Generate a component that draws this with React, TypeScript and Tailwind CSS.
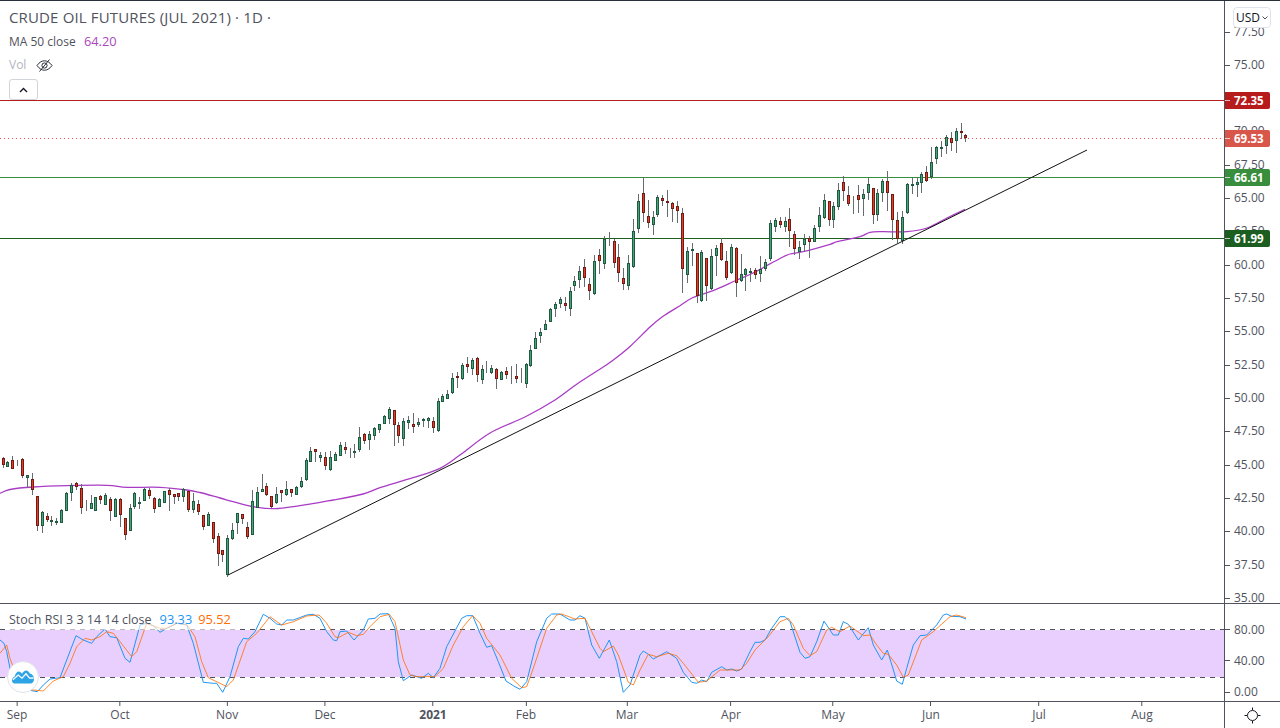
import React from "react";

type C = [number, number, number, number, number, number];
// [zoom x, green?, wick top, body top, body bottom, wick bottom]
const Z3: C[] = [
[10,0,52,55,74,83],[22,1,62,65,80,82],[37,0,48,60,86,87],[52,0,60,69,72,78],[67,0,55,58,107,113],[82,1,104,106,113,143],[97,0,99,118,151,165],[112,0,168,169,257,273],[127,1,212,217,257,278],[142,0,220,229,239,245],[154,1,228,241,245,258],[169,1,234,244,248,255],[184,1,207,211,248,248],[199,1,155,160,212,213],[214,1,128,136,158,183],[229,0,127,130,140,150],[244,0,133,145,203,222],[259,0,180,192,194,213],[274,1,165,190,206,208],[286,1,170,172,212,212],[301,0,165,167,179,192],[316,1,160,166,194,195],[331,0,170,178,212,243],[346,1,175,178,230,232],[361,0,175,178,224,261],[376,0,235,235,284,300],[391,1,193,205,272,273],[403,1,157,160,200,208],[418,1,172,187,191,207],[433,1,143,148,182,183],[448,0,145,151,167,176],[463,0,172,173,206,219],[478,1,173,178,200,201],[493,1,153,154,188,190],[508,0,145,151,164,212],[523,0,162,163,170,192],[535,0,158,160,170,183],[550,1,145,148,170,186],[565,0,152,154,209,215],[580,1,160,184,209,219],[595,0,180,193,215,225],[610,0,225,226,260,270],[625,1,217,222,257,258],[640,0,247,247,296,309],[655,0,280,289,341,378],[667,0,331,331,344,366],[682,1,285,295,404,410],[697,1,250,271,296,300],[712,1,220,220,250,281],[727,0,222,223,236,252],[742,0,247,262,290,297],[757,1,150,184,284,285],[772,1,141,157,204,205],[787,1,102,148,155,155],[799,0,130,139,164,168],[814,0,168,169,200,203],[829,1,141,163,190,191],[844,0,150,151,160,186],[859,1,124,148,164,168],[874,0,146,148,158,170],[889,1,139,142,164,164],[904,1,112,124,142,143],[919,1,53,61,121,123],[931,1,21,34,65,66],[946,0,28,28,35,65],
];
const Z9: C[] = [
[361,1,155,166,173,186],[376,0,155,172,197,210],[391,1,153,172,210,212],[406,1,155,163,182,183],[421,1,127,136,167,168],[436,0,127,142,149,162],[451,1,143,150,152,174],[463,1,133,154,158,175],[478,1,82,112,150,155],[493,0,99,103,122,132],[508,1,94,103,119,150],[523,1,82,85,107,120],[538,1,72,73,89,98],[553,1,45,49,71,72],[568,1,22,28,56,72],[583,0,30,31,74,137],[595,0,67,76,107,128],[610,1,55,64,116,137],[625,1,48,61,68,86],[640,0,40,73,80,98],[655,1,55,67,74,80],[670,1,55,58,64,80],[685,1,50,55,62,85],[700,0,50,64,83,100],[715,1,-5,4,92,95],
];
const Z10: C[] = [
[37,1,492,498,515,516],[52,1,480,492,506,507],[67,1,430,445,488,492],[82,0,425,438,444,474],[97,1,400,406,446,450],[112,0,381,403,410,430],[127,1,385,391,416,436],[142,0,382,385,434,456],[157,1,405,418,449,462],[169,1,393,411,413,430],[184,1,405,415,428,432],[199,0,415,416,446,477],[214,1,423,427,450,451],[229,0,410,424,434,447],[244,1,408,426,428,462],[259,0,403,439,446,458],[274,0,415,450,452,460],[289,1,398,403,461,473],[301,1,345,361,407,410],[316,1,307,325,356,358],[331,1,293,307,317,338],[346,1,270,283,299,300],[361,1,235,238,275,276],[376,1,216,223,236,260],[391,1,202,208,221,235],[406,0,200,220,227,243],[421,1,171,184,238,258],[433,1,138,154,167,182],[448,1,107,124,149,173],[463,0,87,112,145,170],[478,0,145,163,182,209],[493,1,75,94,193,194],[508,0,57,76,92,131],[523,1,18,27,103,117],[538,0,6,22,25,47],[553,0,28,34,100,115],[565,0,42,82,130,156],[580,0,113,145,161,180],[595,1,75,100,169,180],
];
const Z7: C[] = [
[160,1,178,214,320,325],[175,1,103,124,206,218],[190,0,52,100,158,185],[205,0,120,169,188,203],[220,1,153,172,196,224],[232,1,105,112,166,170],[247,0,105,115,122,137],[262,0,90,124,128,172],[277,0,125,130,146,187],[292,0,123,139,154,190],[307,0,145,160,328,400],[322,1,262,274,346,370],[337,1,250,268,274,318],[352,0,278,280,409,430],[364,1,270,277,424,425],[379,0,293,295,379,422],[394,1,268,287,388,390],[409,1,255,265,289,347],[424,0,235,250,301,303],[439,0,272,304,355,360],[454,1,252,262,340,342],[469,0,262,265,370,412],[484,1,282,343,364,367],[496,1,325,328,346,392],[511,1,325,334,338,365],[526,0,325,331,346,357],[541,1,289,328,343,367],[556,1,298,307,328,333],[571,1,180,190,298,303],[586,1,175,181,202,215],
];
const Z8: C[] = [
[1,0,320,334,344,355],[16,1,320,334,350,365],[28,0,295,328,362,410],[43,0,364,373,416,435],[58,1,392,412,425,446],[73,1,372,386,404,422],[88,0,378,385,395,443],[103,1,344,355,395,396],[118,1,292,316,350,365],[133,1,252,271,323,326],[148,0,274,274,329,348],[160,1,275,289,329,355],[175,1,220,241,290,300],[190,0,198,217,242,272],[205,0,228,256,281,287],[220,1,258,270,273,312],[235,0,225,256,269,308],[250,1,238,253,268,318],[265,1,204,223,248,270],[280,0,233,235,314,342],[292,1,238,250,314,333],[307,1,206,214,248,276],[322,0,183,214,248,302],[337,0,253,253,331,390],[352,0,306,331,388,400],[367,1,303,322,394,403],[382,1,220,223,310,312],[397,1,205,223,227,252],[412,1,205,217,224,262],[424,1,185,193,220,248],[439,0,168,187,214,217],[454,1,112,157,200,208],[469,1,108,112,146,162],[484,1,92,112,116,140],[499,1,75,82,109,133],[514,0,67,85,98,124],[529,1,55,64,94,128],[544,0,40,64,68,88],[556,0,73,76,85,97],
];

const toAbs = (list: C[], ox: number, oy: number) =>
  list.map(([z, g, a, b, c, d]) => ({
    x: Math.floor(ox + z / 3),
    g,
    wt: Math.round(oy + a / 3),
    bt: Math.round(oy + b / 3),
    bb: Math.round(oy + c / 3),
    wb: Math.round(oy + d / 3),
  }));

const candles = [
  ...toAbs(Z3, 0, 440),
  ...toAbs(Z9, 200, 400),
  ...toAbs(Z10, 430, 230),
  ...toAbs(Z7, 580, 160),
  ...toAbs(Z8, 780, 110),
];

const maPts: number[][] = "0,493.3 10,489.5 33,487 67,485.7 107,485.3 127,487.3 160,487.3 187,490 200,492.5 220,498 233,501.7 252,506.5 275,508.7 300,505.7 333,500 363,494 380,487.7 413,477.7 440,468.3 460,455 490,433 525,417 555,400 577,384 597,371 612,361 630,346.5 650,327 662,317 680,305.7 693,297.5 713,290.7 737,280 753,273 780,258.5 790,254 803,251.7 830,244.3 837,241.7 860,236.7 870,232.3 883,231.7 907,231.7 927,228 947,218 965,209.3"
  .split(" ")
  .map((p) => p.split(",").map(Number));

// Catmull-Rom to Bezier so the moving average reads as a smooth curve
const maPath = maPts
  .map((p, i) => {
    if (i === 0) return `M${p[0]} ${p[1]}`;
    const p0 = maPts[i - 2] ?? maPts[i - 1];
    const p1 = maPts[i - 1];
    const p3 = maPts[i + 1] ?? p;
    const c1 = [p1[0] + (p[0] - p0[0]) / 6, p1[1] + (p[1] - p0[1]) / 6];
    const c2 = [p[0] - (p3[0] - p1[0]) / 6, p[1] - (p3[1] - p1[1]) / 6];
    return `C${c1[0].toFixed(1)} ${c1[1].toFixed(1)} ${c2[0].toFixed(1)} ${c2[1].toFixed(1)} ${p[0]} ${p[1]}`;
  })
  .join("");

const Z4B = "0,135 12,145 20,170 30,220 45,255 60,270 85,285 112,290 130,270 150,252 180,248 200,195 228,122 250,135 275,145 290,125 315,102 330,125 350,128 375,190 390,202 420,90 440,85 460,92 480,112 500,100 530,85 560,90 580,145 610,262 640,265 650,265 668,292 690,245 715,155 730,130 745,132 765,110 790,58 810,70 830,87 845,90 860,75 880,75 920,60 940,58";
const Z4O = "0,175 20,150 30,190 50,245 70,280 100,285 130,288 160,258 190,245 210,205 230,155 255,130 275,135 300,125 320,110 340,115 360,140 395,185 410,170 440,85 480,100 500,100 530,85 560,88 585,125 605,200 625,248 660,265 680,275 700,255 740,140 770,115 810,65 845,90 880,80 920,63 955,60";
const Z5B = "0,70 20,110 40,135 50,137 60,110 80,108 102,135 130,105 145,72 165,70 180,57 205,56 225,100 235,200 250,257 275,240 305,250 325,235 340,248 360,220 380,155 425,70 440,62 458,62 480,115 500,157 515,152 535,200 558,258 580,272 600,283 620,260 650,140 680,70 695,57 720,57 750,75 765,75 780,62 795,70 815,150 838,190 868,135 890,200 910,292 930,270 960,180";
const Z5O = "0,62 20,85 45,125 55,128 85,112 110,122 130,118 150,95 180,65 208,58 225,80 250,195 270,240 290,245 345,245 370,220 400,150 430,95 458,62 480,85 500,130 540,180 575,250 605,278 620,275 640,220 680,100 710,60 725,57 765,72 795,70 815,110 840,160 850,170 880,153 895,180 925,262 940,270 960,225";
const Z6B = "10,168 25,178 40,192 80,170 110,190 130,232 155,262 170,265 185,255 200,260 215,232 245,215 260,225 275,222 290,228 305,222 330,170 345,142 360,142 375,135 395,100 420,65 435,65 450,80 480,172 495,190 510,185 530,140 552,78 580,120 595,120 610,80 625,88 655,135 685,98 700,150 725,195 742,165 770,258 787,268 800,220 820,150 840,122 860,120 890,90 910,60 920,57 935,64 960,65 978,72";
const Z6O = "25,178 50,185 85,175 110,182 130,205 175,262 200,258 240,225 300,225 320,205 345,165 385,125 420,80 445,70 460,90 490,160 510,182 530,170 560,105 575,97 600,110 630,93 670,122 690,120 710,150 730,175 745,178 770,210 790,247 805,240 845,135 880,110 930,65 950,60 978,68";

const conv = (s: string, ox: number) =>
  s
    .split(" ")
    .map((p) => {
      const [a, b] = p.split(",").map(Number);
      return `${(ox + a / 3).toFixed(1)},${(595 + b / 3).toFixed(1)}`;
    })
    .join(" ");

const blue = [conv(Z4B, 0), conv(Z5B, 320), conv(Z6B, 640)].join(" ");
const orange = [conv(Z4O, 0), conv(Z5O, 320), conv(Z6O, 640)].join(" ");

const priceTicks: [string, number][] = [
  ["77.50", 32], ["75.00", 65], ["70.00", 131], ["67.50", 165], ["65.00", 198], ["62.50", 231],
  ["60.00", 265], ["57.50", 298], ["55.00", 331], ["52.50", 365], ["50.00", 398], ["47.50", 431],
  ["45.00", 465], ["42.50", 498], ["40.00", 531], ["37.50", 565], ["35.00", 598],
];
const rsiTicks: [string, number][] = [["80.00", 629.5], ["40.00", 660.5], ["0.00", 692]];
const badges: [string, number, string][] = [
  ["72.35", 92, "bg-[#b71c1c]"],
  ["69.53", 130, "bg-[#d9574a]"],
  ["66.61", 169, "bg-[#388e3c]"],
  ["61.99", 230, "bg-[#1b5e20]"],
];
const months: [string, number, boolean][] = [
  ["Sep", 17, false], ["Oct", 120, false], ["Nov", 227, false], ["Dec", 325, false], ["2021", 433, true],
  ["Feb", 526, false], ["Mar", 627, false], ["Apr", 731, false], ["May", 833, false], ["Jun", 931, false],
  ["Jul", 1039, false], ["Aug", 1142, false],
];

function AxisLabel({ text, y, top }: { text: string; y: number; top: number }) {
  return (
    <div className="absolute left-0 flex items-center h-4 -translate-y-1/2" style={{ top: y - top }}>
      <span className="w-[5px] h-px bg-[#50535e]" />
      <span className="ml-[4px] text-xs leading-4 text-[#50535e]">{text}</span>
    </div>
  );
}

export default function App() {
  return (
    <div className="w-[1280px] h-[728px] bg-white border-t border-[#2a2e39] flex flex-col overflow-hidden font-['Open_Sans','Liberation_Sans',sans-serif]">
      {/* main pane */}
      <div className="h-[603px] flex border-b border-[#50535e]">
        <div className="relative w-[1224px]">
          <svg className="block w-[1224px] h-[602px]" viewBox="0 1 1224 602">
            <line x1="0" x2="1224" y1="100.5" y2="100.5" stroke="#b71c1c" />
            <line x1="0" x2="1224" y1="138.5" y2="138.5" stroke="#ef5350" strokeDasharray="1 3" />
            <line x1="0" x2="1224" y1="177.5" y2="177.5" stroke="#388e3c" />
            <line x1="0" x2="1224" y1="238.5" y2="238.5" stroke="#1b5e20" />
            <path d={maPath} fill="none" stroke="#a93cc4" strokeWidth="1.3" strokeLinejoin="round" />
            {candles.map((c, i) => (
              <g key={i} shapeRendering="crispEdges">
                <rect x={c.x} y={c.wt} width="1" height={Math.max(c.wb - c.wt, 1)} fill="#666b70" />
                <rect
                  x={c.x - 0.5}
                  y={c.bt + 0.5}
                  width="2"
                  height={Math.max(c.bb - c.bt - 1, 0)}
                  fill={c.g ? "#4aa37a" : "#e53c28"}
                  stroke={c.g ? "#1e5a40" : "#6f1d14"}
                />
              </g>
            ))}
            <line x1="228" y1="575" x2="1087" y2="150" stroke="#111" strokeWidth="1" />
          </svg>
          <div className="absolute left-[9px] top-[6px] flex flex-col items-start">
            <div className="h-5 text-[15px] leading-5 tracking-[0.15px] text-[#50535e] whitespace-nowrap">CRUDE OIL FUTURES (JUL 2021) · 1D ·</div>
            <div className="mt-1 h-5 text-xs leading-5 text-[#50535e] whitespace-nowrap">
              MA 50 close <span className="ml-[5px] text-[12.8px] text-[#ab47bc]">64.20</span>
            </div>
            <div className="mt-1 h-5 flex items-center text-xs text-[#b2b5be]">
              Vol
              <svg className="ml-[10px]" width="17" height="17" viewBox="0 0 17 17" fill="none" stroke="#2a2e39" strokeWidth="1">
                <path d="M1 8.5C3.5 5 6 3.8 8.5 3.8S13.5 5 16 8.5C13.5 12 11 13.2 8.5 13.2S3.5 12 1 8.5Z" />
                <circle cx="8.5" cy="8.5" r="2.6" />
                <path d="M3.5 14.5 13.5 2.5" />
              </svg>
            </div>
            <button className="mt-[4px] w-[29px] h-[21px] flex items-center justify-center bg-white border border-[#d1d4dc] rounded-[3px]">
              <svg width="9" height="6" viewBox="0 0 9 6" fill="none" stroke="#131722" strokeWidth="1.4">
                <path d="M1 5 4.5 1.6 8 5" />
              </svg>
            </button>
          </div>
        </div>
        <div className="relative flex-1 border-l border-[#50535e]">
          {priceTicks.map(([t, y]) => (
            <AxisLabel key={t} text={t} y={y} top={1} />
          ))}
          {badges.map(([t, y, bg]) => (
            <div
              key={t}
              className={`absolute left-0 w-[45px] h-[17px] rounded-r-[2px] flex items-center text-[11.5px] font-bold text-white ${bg}`}
              style={{ top: y - 1 }}
            >
              <span className="w-[5px] h-px bg-white/70" />
              <span className="ml-[4px] leading-4">{t}</span>
            </div>
          ))}
          <button className="absolute left-[8px] top-[6px] w-[38px] h-[21px] flex items-center justify-center gap-[2px] bg-white/90 border border-[#e0e3eb] rounded-[4px] text-xs text-[#131722]">
            USD
            <svg width="6" height="4" viewBox="0 0 6 4" fill="none" stroke="#50535e" strokeWidth="1">
              <path d="M.5.5 3 3 5.5.5" />
            </svg>
          </button>
        </div>
      </div>
      {/* Stoch RSI pane */}
      <div className="h-[98px] flex border-b border-[#50535e]">
        <div className="relative w-[1224px]">
          <svg className="block w-[1224px] h-[97px]" viewBox="0 604 1224 97">
            <rect x="0" y="630" width="1224" height="47" fill="#e9cffd" />
            <line x1="0" x2="1224" y1="629.5" y2="629.5" stroke="#50535e" strokeDasharray="5 5" />
            <line x1="0" x2="1224" y1="677.5" y2="677.5" stroke="#50535e" strokeDasharray="5 5" />
            <polyline points={blue} fill="none" stroke="#2196f3" strokeWidth="1" strokeLinejoin="round" />
            <polyline points={orange} fill="none" stroke="#ff6d00" strokeOpacity="0.8" strokeWidth="1" strokeLinejoin="round" />
          </svg>
          <div className="absolute left-[9px] top-[6px] pr-[5px] h-5 flex items-center bg-white/60 text-[12.5px] text-[#50535e] whitespace-nowrap">
            Stoch RSI 3 3 14 14 close
            <span className="ml-[8px] text-[12.8px] text-[#2196f3]">93.33</span>
            <span className="ml-[6px] text-[12.8px] text-[#ff6d00]">95.52</span>
          </div>
          <div className="absolute left-[7px] top-[57px] w-[32px] h-[32px] rounded-full bg-white border border-[#e0e3eb] flex items-center justify-center">
            <svg width="22" height="14" viewBox="0 0 22 14">
              <path
                fill="#2ea3e6"
                d="M0 10.5C0 8.6 1.2 7.2 2.6 6.6 3.4 3.6 5 1.6 6.8 1.6 8 1.6 9 2.6 10 3.8 11 2 12.6.6 14.2.6 15.8.6 17 2 17.8 3.6 20 3.8 22 6 22 9 22 11.6 20.6 13.4 19 13.4H2.6C1 13.4 0 12.2 0 10.5Z"
              />
              <path d="M1 9.8 6.2 5 10 8.2 14 3.8 17.6 8.2 21.5 8" fill="none" stroke="#fff" strokeWidth="1.3" />
            </svg>
          </div>
        </div>
        <div className="relative flex-1 border-l border-[#50535e]">
          {rsiTicks.map(([t, y]) => (
            <AxisLabel key={t} text={t} y={y} top={604} />
          ))}
        </div>
      </div>
      {/* time axis */}
      <div className="flex-1 flex">
        <div className="relative w-[1224px]">
          {months.map(([t, x, bold]) => (
            <div key={t} className="absolute top-0 flex flex-col items-center -translate-x-1/2" style={{ left: x }}>
              <span className="w-px h-[4px] bg-[#50535e]" />
              <span className={`mt-[1px] text-xs leading-4 text-[#50535e] ${bold ? "font-bold" : ""}`}>{t}</span>
            </div>
          ))}
        </div>
        <div className="flex-1 border-l border-[#50535e] flex items-center justify-center">
          <svg width="17" height="17" viewBox="0 0 17 17" fill="none" stroke="#131722" strokeWidth="1">
            <circle cx="8.5" cy="8.5" r="5" />
            <path d="M8.5 0.5V3M8.5 14V16.5M.5 8.5H3M14 8.5H16.5" />
          </svg>
        </div>
      </div>
    </div>
  );
}
